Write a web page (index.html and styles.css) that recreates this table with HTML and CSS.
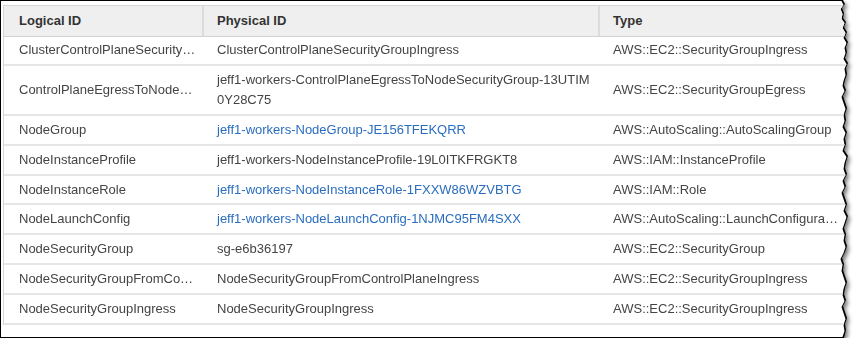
FILE: index.html
```html
<!DOCTYPE html>
<html>
<head>
<meta charset="utf-8">
<link rel="stylesheet" href="styles.css">
</head>
<body>
<div class="shot">
  <div class="edge torn">
    <div class="paper torn">
      <table class="res">
        <colgroup><col class="c1"><col class="c2"><col class="c3"></colgroup>
        <thead>
          <tr><th>Logical ID</th><th>Physical ID</th><th>Type</th></tr>
        </thead>
        <tbody>
          <tr><td>ClusterControlPlaneSecurity…</td><td>ClusterControlPlaneSecurityGroupIngress</td><td>AWS::EC2::SecurityGroupIngress</td></tr>
          <tr><td>ControlPlaneEgressToNode…</td><td class="wrap">jeff1-workers-ControlPlaneEgressToNodeSecurityGroup-13UTIM0Y28C75</td><td>AWS::EC2::SecurityGroupEgress</td></tr>
          <tr><td>NodeGroup</td><td><a class="lnk" href="#">jeff1-workers-NodeGroup-JE156TFEKQRR</a></td><td>AWS::AutoScaling::AutoScalingGroup</td></tr>
          <tr><td>NodeInstanceProfile</td><td>jeff1-workers-NodeInstanceProfile-19L0ITKFRGKT8</td><td>AWS::IAM::InstanceProfile</td></tr>
          <tr><td>NodeInstanceRole</td><td><a class="lnk" href="#">jeff1-workers-NodeInstanceRole-1FXXW86WZVBTG</a></td><td>AWS::IAM::Role</td></tr>
          <tr><td>NodeLaunchConfig</td><td><a class="lnk" href="#">jeff1-workers-NodeLaunchConfig-1NJMC95FM4SXX</a></td><td>AWS::AutoScaling::LaunchConfigura…</td></tr>
          <tr><td>NodeSecurityGroup</td><td>sg-e6b36197</td><td>AWS::EC2::SecurityGroup</td></tr>
          <tr><td>NodeSecurityGroupFromCo…</td><td>NodeSecurityGroupFromControlPlaneIngress</td><td>AWS::EC2::SecurityGroupIngress</td></tr>
          <tr><td>NodeSecurityGroupIngress</td><td>NodeSecurityGroupIngress</td><td>AWS::EC2::SecurityGroupIngress</td></tr>
        </tbody>
      </table>
    </div>
  </div>
</div>
</body>
</html>
```
FILE: styles.css
```css
html, body {
  margin: 0;
  padding: 0;
  background: #ffffff;
}

.shot {
  width: 851px;
  filter: drop-shadow(2px 3px 2px rgba(0, 0, 0, 0.55));
}

.torn {
  clip-path: polygon(
    0 0,
    calc(100% - 8px - var(--o)) 0,
    calc(100% - 6px - var(--o)) 4px,
    calc(100% - 9px - var(--o)) 8px,
    calc(100% - 7px - var(--o)) 13px,
    calc(100% - 8px - var(--o)) 18px,
    calc(100% - 5px - var(--o)) 22px,
    calc(100% - 7px - var(--o)) 27px,
    calc(100% - 4px - var(--o)) 32px,
    calc(100% - 6px - var(--o)) 37px,
    calc(100% - 3px - var(--o)) 42px,
    calc(100% - 5px - var(--o)) 47px,
    calc(100% - 4px - var(--o)) 52px,
    calc(100% - 6px - var(--o)) 58px,
    calc(100% - 3px - var(--o)) 63px,
    calc(100% - 5px - var(--o)) 68px,
    calc(100% - 4px - var(--o)) 74px,
    calc(100% - 6px - var(--o)) 80px,
    calc(100% - 7px - var(--o)) 85px,
    calc(100% - 5px - var(--o)) 90px,
    calc(100% - 8px - var(--o)) 96px,
    calc(100% - 6px - var(--o)) 102px,
    calc(100% - 4px - var(--o)) 108px,
    calc(100% - 6px - var(--o)) 114px,
    calc(100% - 5px - var(--o)) 120px,
    calc(100% - 7px - var(--o)) 126px,
    calc(100% - 4px - var(--o)) 132px,
    calc(100% - 6px - var(--o)) 138px,
    calc(100% - 5px - var(--o)) 144px,
    calc(100% - 7px - var(--o)) 150px,
    calc(100% - 3px - var(--o)) 156px,
    calc(100% - 5px - var(--o)) 162px,
    calc(100% - 6px - var(--o)) 168px,
    calc(100% - 4px - var(--o)) 174px,
    calc(100% - 7px - var(--o)) 180px,
    calc(100% - 5px - var(--o)) 186px,
    calc(100% - 8px - var(--o)) 192px,
    calc(100% - 6px - var(--o)) 198px,
    calc(100% - 4px - var(--o)) 204px,
    calc(100% - 6px - var(--o)) 210px,
    calc(100% - 3px - var(--o)) 216px,
    calc(100% - 5px - var(--o)) 222px,
    calc(100% - 7px - var(--o)) 228px,
    calc(100% - 5px - var(--o)) 234px,
    calc(100% - 6px - var(--o)) 240px,
    calc(100% - 4px - var(--o)) 246px,
    calc(100% - 6px - var(--o)) 252px,
    calc(100% - 9px - var(--o)) 258px,
    calc(100% - 7px - var(--o)) 264px,
    calc(100% - 8px - var(--o)) 270px,
    calc(100% - 6px - var(--o)) 276px,
    calc(100% - 4px - var(--o)) 282px,
    calc(100% - 6px - var(--o)) 288px,
    calc(100% - 7px - var(--o)) 294px,
    calc(100% - 5px - var(--o)) 300px,
    calc(100% - 8px - var(--o)) 306px,
    calc(100% - 6px - var(--o)) 312px,
    calc(100% - 4px - var(--o)) 318px,
    calc(100% - 6px - var(--o)) 324px,
    calc(100% - 5px - var(--o)) 330px,
    calc(100% - 7px - var(--o)) 100%,
    0 100%
  );
}

.edge {
  --o: 0px;
  background: #000000;
  height: 336px;
  padding: 1px 0 1px 1px;
}

.paper {
  --o: 1.5px;
  background: #ffffff;
  height: 332px;
  padding: 4px 0 0 2px;
  overflow: hidden;
}

.res {
  width: 880px;
  table-layout: fixed;
  border-collapse: separate;
  border-spacing: 0;
  border-top: 1px solid #d6d6d6;
  border-left: 1px solid #d6d6d6;
  font-family: "Liberation Sans", Arial, sans-serif;
  font-size: 13px;
}

.c1 { width: 198px; }
.c2 { width: 396px; }
.c3 { width: 286px; }

.res th {
  background: #efefef;
  color: #333333;
  font-weight: bold;
  text-align: left;
  line-height: 20px;
  padding: 5px 15px 4.5px 15px;
  border-bottom: 1px solid #d3d3d3;
  white-space: nowrap;
}

.res th + th {
  box-shadow: inset 2px 0 0 #dcdcdc;
}

.res td {
  color: #444444;
  line-height: 20px;
  padding: 3.9px 15px 3.9px 15px;
  border-bottom: 2px solid #e6e6e6;
  white-space: nowrap;
  overflow: hidden;
  vertical-align: middle;
}

.res td.wrap {
  white-space: normal;
  word-break: break-all;
  padding-right: 4px;
}

.lnk {
  color: #2a6dbf;
  text-decoration: none;
}
```
